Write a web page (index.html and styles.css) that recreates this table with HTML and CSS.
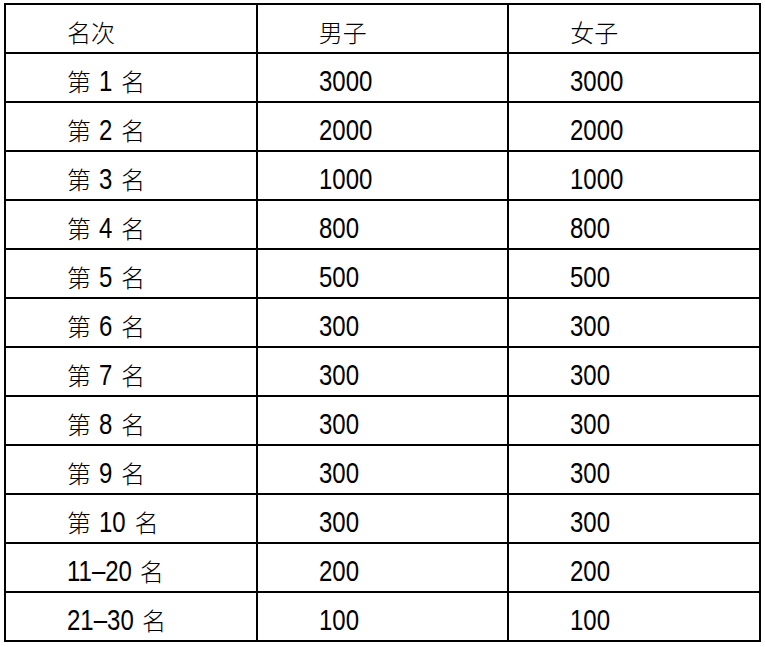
FILE: index.html
```html
<!DOCTYPE html>
<html lang="zh">
<head>
<meta charset="utf-8">
<link rel="stylesheet" href="styles.css">
</head>
<body>
<table class="prize">
  <colgroup><col class="c"><col class="c"><col class="c"></colgroup>
  <tr><td><span class="zh">名次</span></td><td><span class="zh">男子</span></td><td><span class="zh">女子</span></td></tr>
  <tr><td><span class="zh">第</span> <span class="num w1">1</span> <span class="zh">名</span></td><td><span class="num">3000</span></td><td><span class="num">3000</span></td></tr>
  <tr><td><span class="zh">第</span> <span class="num w1">2</span> <span class="zh">名</span></td><td><span class="num">2000</span></td><td><span class="num">2000</span></td></tr>
  <tr><td><span class="zh">第</span> <span class="num w1">3</span> <span class="zh">名</span></td><td><span class="num">1000</span></td><td><span class="num">1000</span></td></tr>
  <tr><td><span class="zh">第</span> <span class="num w1">4</span> <span class="zh">名</span></td><td><span class="num">800</span></td><td><span class="num">800</span></td></tr>
  <tr><td><span class="zh">第</span> <span class="num w1">5</span> <span class="zh">名</span></td><td><span class="num">500</span></td><td><span class="num">500</span></td></tr>
  <tr><td><span class="zh">第</span> <span class="num w1">6</span> <span class="zh">名</span></td><td><span class="num">300</span></td><td><span class="num">300</span></td></tr>
  <tr><td><span class="zh">第</span> <span class="num w1">7</span> <span class="zh">名</span></td><td><span class="num">300</span></td><td><span class="num">300</span></td></tr>
  <tr><td><span class="zh">第</span> <span class="num w1">8</span> <span class="zh">名</span></td><td><span class="num">300</span></td><td><span class="num">300</span></td></tr>
  <tr><td><span class="zh">第</span> <span class="num w1">9</span> <span class="zh">名</span></td><td><span class="num">300</span></td><td><span class="num">300</span></td></tr>
  <tr><td><span class="zh">第</span> <span class="num w2">10</span> <span class="zh">名</span></td><td><span class="num">300</span></td><td><span class="num">300</span></td></tr>
  <tr><td><span class="num w5">11–20</span> <span class="zh">名</span></td><td><span class="num">200</span></td><td><span class="num">200</span></td></tr>
  <tr><td><span class="num w5">21–30</span> <span class="zh">名</span></td><td><span class="num">100</span></td><td><span class="num">100</span></td></tr>
</table>
</body>
</html>
```
FILE: styles.css
```css
html, body {
  margin: 0;
  padding: 0;
  background: #fff;
}
body {
  padding: 3px 0 0 4px;
}
.prize {
  border-collapse: separate;
  border-spacing: 0;
  table-layout: fixed;
  width: 757px;
  border-top: 2px solid #000;
  border-left: 2px solid #000;
  font-family: "Liberation Sans", "Noto Sans CJK SC", sans-serif;
  font-size: 30px;
  color: #000;
}
.prize td {
  box-sizing: content-box;
  padding: 6px 0 0 61px;
  height: 41px;
  border-right: 2px solid #000;
  border-bottom: 2px solid #000;
  vertical-align: middle;
  line-height: 30px;
  white-space: nowrap;
}
.num {
  display: inline-block;
  transform: scaleX(0.8);
  transform-origin: 0 50%;
}
.num.w1 { margin-right: -3.3px; }
.num.w2 { margin-right: -6.7px; }
.num.w5 { margin-right: -16.7px; }
.zh {
  font-family: "Noto Sans CJK SC", sans-serif;
  font-size: 24px;
  font-weight: 300;
}
```
